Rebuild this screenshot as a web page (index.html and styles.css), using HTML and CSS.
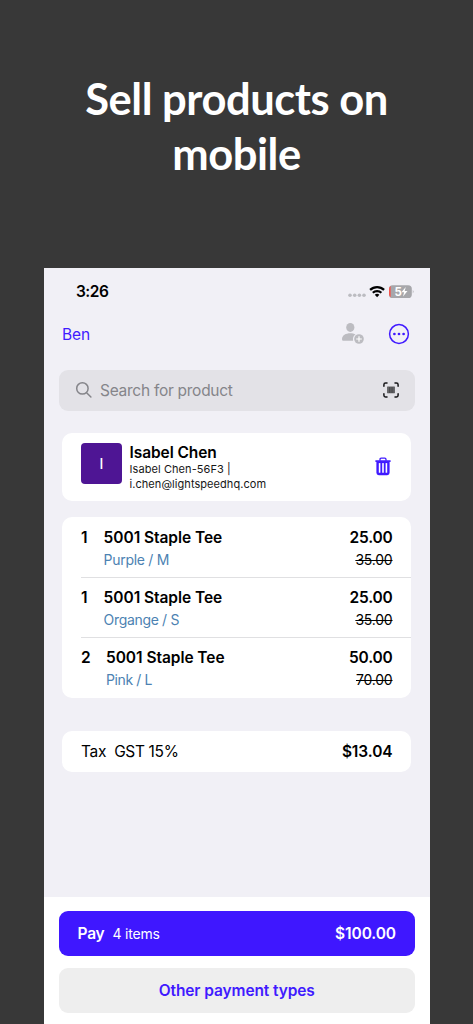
FILE: index.html
```html
<!DOCTYPE html>
<html lang="en">
<head>
<meta charset="utf-8">
<title>Sell products on mobile</title>
<link rel="stylesheet" href="styles.css">
</head>
<body>
<div class="page">
  <h1 class="headline">Sell products on<br>mobile</h1>
  <main class="phone">
    <div class="status">
      <span class="clock">3:26</span>
      <svg class="status-icons" width="68" height="16" viewBox="0 0 68 16">
        <g fill="#bcbcc1"><circle cx="3" cy="11.2" r="1.8"/><circle cx="7.7" cy="11.2" r="1.8"/><circle cx="12.4" cy="11.2" r="1.8"/><circle cx="17" cy="11.2" r="1.8"/></g>
        <g fill="none" stroke="#000" stroke-width="2.2"><path d="M23.1 5.9a10 10 0 0 1 14 0"/><path d="M25.8 8.8a6.1 6.1 0 0 1 8.6 0"/></g>
        <path d="M30.1 13.2l-2.3-2.4a3.3 3.3 0 0 1 4.6 0z"/>
        <rect x="42" y="1.2" width="22.8" height="12.8" rx="3.6" fill="#a7a7ab"/>
        <path d="M43.7 2a3.5 3.5 0 0 0-1.7 3v5.2a3.5 3.5 0 0 0 1.7 3z" fill="#f4574f"/>
        <path d="M65.8 5.8q1.6 1.9 0 3.8z" fill="#a7a7ab"/>
        <text class="battery" x="47.4" y="11.7">5</text>
        <path d="M58.8 3l-4.4 5.3h2.7l-1.1 4.2 4.5-5.5h-2.8z" fill="#fff"/>
      </svg>
    </div>
    <nav class="nav">
      <span class="user">Ben</span>
      <svg width="24" height="24" viewBox="0 0 24 24" fill="#bcbcc1">
        <ellipse cx="9.3" cy="5.4" rx="4.1" ry="4.5"/>
        <path d="M1 17.2c0-4 3.8-6 8.3-6 2 0 3.8.4 5.2 1.2-2 1.2-3 3.4-2.4 6.3H2.2q-1.2 0-1.2-1.5z"/>
        <circle cx="18" cy="17" r="4.8"/><path d="M18 14.2v5.6M15.2 17h5.6" stroke="#fff" stroke-width="1.2"/>
      </svg>
      <svg class="more" width="22" height="22" viewBox="0 0 22 22">
        <circle cx="11" cy="11" r="9.4" fill="none" stroke="#401aff" stroke-width="1.5"/>
        <g fill="#401aff"><circle cx="6.4" cy="11" r="1.35"/><circle cx="11" cy="11" r="1.35"/><circle cx="15.6" cy="11" r="1.35"/></g>
      </svg>
    </nav>
    <div class="search">
      <svg width="18" height="18" viewBox="0 0 18 18" fill="none" stroke="#85858a" stroke-width="1.5" stroke-linecap="round"><circle cx="7.4" cy="7.4" r="5.7"/><path d="M11.6 11.7l4.3 4.3"/></svg>
      <span class="placeholder">Search for product</span>
      <svg width="18" height="18" viewBox="0 0 18 18">
        <path d="M1.9 5.2V3.7q0-1.6 1.6-1.6H5M13 2.1h1.5q1.6 0 1.6 1.6v1.5M16.1 12.8v1.5q0 1.6-1.6 1.6H13M5 15.9H3.5q-1.6 0-1.6-1.6v-1.5" fill="none" stroke="#161618" stroke-width="1.5" stroke-linecap="round"/>
        <rect x="5.2" y="5.6" width="7.6" height="6.6" fill="#4a4a4c"/><path d="M6.4 5.6v6.6M8.9 5.6v6.6M11.2 5.6v6.6" stroke="#858588" stroke-width=".5"/>
      </svg>
    </div>
    <section class="card customer">
      <span class="avatar">I</span>
      <div class="who">
        <div class="name">Isabel Chen</div>
        <div class="detail code">Isabel Chen-56F3 |</div>
        <div class="detail">i.chen@lightspeedhq.com</div>
      </div>
      <svg width="16" height="19" viewBox="0 0 16 19" fill="none" stroke="#401aff">
        <path d="M5 3.7V2.4Q5 1.1 6.2 1.1h3.6Q11 1.1 11 2.4v1.3" stroke-width="1.3"/>
        <path d="M.4 4.1h15.2" stroke-width="1.7"/>
        <path d="M2.6 4.7v11.1q0 1.2 1.2 1.2h8.4q1.2 0 1.2-1.2V4.7" stroke-width="2.4"/>
        <path d="M6.3 4.5v11.8M9.7 4.5v11.8" stroke-width="1.8"/>
        <path d="M3 5.4h10" stroke-width="1.4"/>
      </svg>
    </section>
    <section class="card items">
      <div class="item"><span class="qty">1</span><div class="product"><div class="title">5001 Staple Tee</div><div class="variant v1">Purple / M</div></div><div class="amount"><div class="price">25.00</div><s class="was">35.00</s></div></div>
      <div class="item"><span class="qty">1</span><div class="product"><div class="title">5001 Staple Tee</div><div class="variant v2">Organge / S</div></div><div class="amount"><div class="price">25.00</div><s class="was">35.00</s></div></div>
      <div class="item wide"><span class="qty">2</span><div class="product"><div class="title">5001 Staple Tee</div><div class="variant v3">Pink / L</div></div><div class="amount"><div class="price">50.00</div><s class="was">70.00</s></div></div>
    </section>
    <section class="card tax">
      <span class="tax-label">Tax</span><span class="tax-name">GST 15%</span><span class="tax-total">$13.04</span>
    </section>
    <footer class="footer">
      <div class="button pay"><span class="pay-label">Pay</span><span class="count">4 items</span><span class="total">$100.00</span></div>
      <div class="button other"><span class="other-label">Other payment types</span></div>
    </footer>
  </main>
</div>
</body>
</html>
```
FILE: styles.css
```css
* { box-sizing: border-box; }
body { margin: 0; background: #383838; font-family: Inter, "Liberation Sans", sans-serif; color: #000; }
.page { height: 1024px; padding: 0 43px 0 44px; overflow: hidden; display: flex; flex-direction: column; }
.headline { margin: 0; height: 268px; padding: 71px 1px 0 0; color: #fff; font: 700 43.5px/55px Lato, sans-serif; letter-spacing: -.48px; text-align: center; white-space: nowrap; flex: none; }
.phone { flex: 1; background: #f1f0f6; display: flex; flex-direction: column; min-height: 0; }
.status { height: 48px; padding: 0 15.5px 0 32px; display: flex; align-items: center; justify-content: space-between; }
.clock { font-size: 15.5px; line-height: 20px; font-weight: 600; letter-spacing: -.5px; margin-top: -1px; }
.battery { font: 700 11.5px Inter, sans-serif; fill: #fff; }
.nav { height: 36px; padding: 0 20px 0 18px; display: flex; align-items: center; }
.user { margin-right: auto; color: #401aff; font-size: 15.5px; letter-spacing: -.1px; }
.more { margin-left: 23px; }
.search { height: 41px; margin: 17.5px 15px 0 14.5px; padding: 0 15px 0 16px; border-radius: 9px; background: #e3e2e7; display: flex; align-items: center; }
.placeholder { margin: 0 auto 0 7.5px; color: #85858a; font-size: 15.5px; letter-spacing: -.27px; }
.card { margin: 0 19px 0 18.4px; background: #fff; border-radius: 10px; }
.customer { height: 68px; margin-top: 22.5px; padding: 10px 20px 0 18.6px; display: flex; }
.avatar { width: 41px; height: 41px; border-radius: 4px; background: #4e1594; color: #fff; font-size: 14px; font-weight: 500; display: grid; place-items: center; }
.who { margin: 0 auto 0 7.5px; }
.customer svg { margin-top: 14px; }
.name { font-size: 15.5px; line-height: 19px; font-weight: 600; letter-spacing: -.08px; }
.detail { font-size: 11px; line-height: 15px; color: #161616; letter-spacing: .06px; }
.code { letter-spacing: .08px; }
.items { margin-top: 16.4px; height: 181px; padding-left: 18.6px; }
.item { height: 60.3px; padding: 10.2px 18.5px 0 0; border-bottom: 1px solid #e0e0e2; display: flex; }
.item:last-child { border-bottom: 0; }
.qty { width: 22.6px; font-size: 15.5px; line-height: 20px; font-weight: 600; }
.wide .qty { width: 25px; }
.title, .price { font-size: 15.5px; line-height: 20px; font-weight: 600; letter-spacing: -.05px; }
.price { letter-spacing: -.2px; }
.variant { color: #4c82b2; font-size: 14px; line-height: 24px; letter-spacing: -.33px; }
.v1 { letter-spacing: -.3px; }
.v3 { letter-spacing: -.4px; }
.amount { margin-left: auto; text-align: right; }
.was { display: block; font-size: 14px; line-height: 24px; letter-spacing: -.2px; }
.tax { height: 41px; margin-top: 32.6px; padding: 1px 18.5px 0 18.6px; display: flex; align-items: center; font-size: 15.5px; }
.tax-label { letter-spacing: -.3px; }
.tax-name { margin-left: 8px; letter-spacing: -.35px; }
.tax-total { margin-left: auto; font-weight: 600; letter-spacing: -.1px; }
.footer { margin-top: auto; height: 127.5px; padding: 14.5px 15px 0 14.5px; background: #fff; display: flex; flex-direction: column; gap: 11.5px; }
.button { height: 45.4px; border-radius: 9px; display: flex; align-items: center; font-size: 15.5px; font-weight: 600; flex: none; }
.pay { padding: 0 19px; background: #3f17ff; color: #fff; }
.pay-label { letter-spacing: -.2px; }
.count { margin-left: 8px; font-size: 14px; font-weight: 400; letter-spacing: -.2px; }
.total { margin-left: auto; letter-spacing: -.1px; }
.other { justify-content: center; background: #eee; color: #401aff; letter-spacing: -.1px; }
```
